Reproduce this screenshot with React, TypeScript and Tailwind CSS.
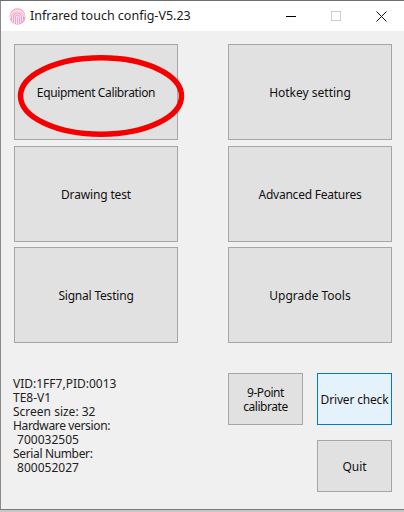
import { ReactNode } from 'react'

const font = { fontFamily: '"Noto Sans", "Open Sans", sans-serif' }

function Btn({ children, className = '' }: { children: ReactNode; className?: string }) {
  return (
    <div className={`flex items-center justify-center text-center border border-[#a6a6a6] bg-[#e1e1e1] pt-[2px] text-[12px] leading-[14px] text-[#111] ${className}`}>
      {children}
    </div>
  )
}

function Fingerprint() {
  return (
    <svg width="17" height="17" viewBox="0 0 17 17" fill="none" stroke="#ffffff" strokeWidth="0.8">
      <ellipse cx="8.5" cy="8.5" rx="8" ry="8.3" fill="#ff9cc4" stroke="none" />
      <path d="M2 6.5a7 7 0 0 1 13 0" />
      <path d="M1.5 10.5a7 7 0 0 1 14-1.5" />
      <path d="M3.5 14V9a5 5 0 0 1 10 0v4" />
      <path d="M5.5 15.5V9a3 3 0 0 1 6 0v6" />
      <path d="M7.5 16V9a1 1 0 0 1 2 0v7" />
    </svg>
  )
}

export default function App() {
  return (
    <div style={font} className="relative w-[404px] h-[512px] flex flex-col bg-[#f0f0f0] border-t border-t-[#6e6e6e] overflow-hidden">
      {/* Title bar */}
      <div className="h-[30px] shrink-0 flex items-center bg-white border-l border-l-[#8a8a8a] pl-[8px]">
        <Fingerprint />
        <span className="ml-[4px] text-[12.5px] text-[#1a1a1a]">Infrared touch config-V5.23</span>
        <div className="ml-auto flex items-center">
          <div className="w-[10px] h-[1px] bg-black mr-[35px]" />
          <div className="w-[10px] h-[10px] border border-[#cccccc] mr-[35px]" />
          <svg width="11" height="11" viewBox="0 0 11 11" stroke="#111" strokeWidth="1" className="mr-[17px]">
            <path d="M.5.5l10 10M10.5.5l-10 10" />
          </svg>
        </div>
      </div>

      {/* Client area */}
      <div className="flex-1 flex flex-col border-l border-l-[#8a8a8a] pl-[13px] pr-[12px] pt-[13px]">
        <div className="grid grid-cols-[164px_164px] justify-between gap-y-[6px]">
          <Btn className="h-[96px] tracking-[-0.38px]">Equipment Calibration</Btn>
          <Btn className="h-[96px]">Hotkey setting</Btn>
          <Btn className="h-[96px] tracking-[-0.15px]">Drawing test</Btn>
          <Btn className="h-[96px] tracking-[-0.24px]">Advanced Features</Btn>
          <Btn className="h-[96px] -mt-[1px] tracking-[-0.2px]">Signal Testing</Btn>
          <Btn className="h-[96px] -mt-[1px]">Upgrade Tools</Btn>
        </div>

        <div className="flex mt-[30px]">
          <div className="pt-[4px] -ml-[1px] text-[12px] leading-[14px] text-[#222] whitespace-pre">
            <div>VID:1FF7,PID:0013</div>
            <div>TE8-V1</div>
            <div>Screen size: 32</div>
            <div className="tracking-[-0.35px]">Hardware version:</div>
            <div className="pl-[1px]"> 700032505</div>
            <div className="tracking-[-0.35px]">Serial Number:</div>
            <div className="pl-[1px]"> 800052027</div>
          </div>
          <div className="ml-auto grid grid-cols-[75px_75px] gap-x-[14px] gap-y-[15px]">
            <Btn className="h-[52px] tracking-[-0.45px]">9-Point<br />calibrate</Btn>
            <Btn className="h-[52px] tracking-[-0.17px] !border-[#0078d7] !bg-[#e5f1fb]">Driver check</Btn>
            <div />
            <Btn className="h-[52px]">Quit</Btn>
          </div>
        </div>
      </div>

      {/* Window bottom edge */}
      <div className="h-[3px] shrink-0 bg-[#c8c8c8] border-t border-t-[#7a7a7a]" />

      {/* Red marker around the first button */}
      <svg width="404" height="512" className="absolute left-0 top-[-1px] pointer-events-none">
        <ellipse cx="101" cy="96" rx="80.5" ry="38.3" fill="none" stroke="#f50000" strokeWidth="5.5" />
      </svg>
    </div>
  )
}
